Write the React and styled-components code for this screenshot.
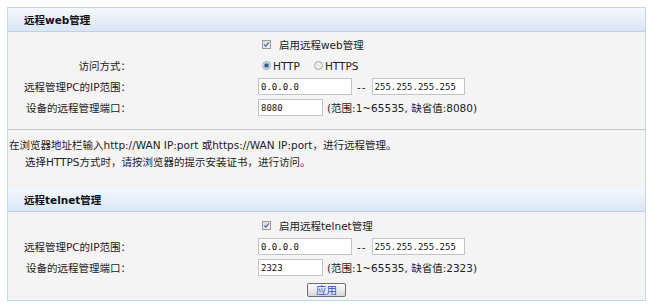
import React from 'react'
import styled, { createGlobalStyle } from 'styled-components'

const GlobalStyle = createGlobalStyle`
  html, body {
    margin: 0;
    padding: 0;
    background: #ffffff;
  }
  body {
    font-family: "DejaVu Sans", "Noto Sans CJK SC", sans-serif;
    font-size: 10.5px;
    color: #222;
  }
`

const Page = styled.div`
  padding: 7px 8px 2px 7px;
`

const Panel = styled.div`
  border: 1px solid #c5d6ec;
  background: #f4f4f4;
`

const Header = styled.div`
  height: 23px;
  border-bottom: 1px solid #bad0ec;
  background: linear-gradient(to bottom, #f5f8fd 0%, #e9f0fa 45%, #d9e6f7 100%);
  display: flex;
  align-items: center;
  padding-left: 16px;
  font-weight: bold;
  font-size: 10.5px;
  color: #111;
`

const Form = styled.div`
  display: grid;
  grid-template-columns: 123px 1fr;
  column-gap: 127px;
  grid-auto-rows: 21px;
  align-items: center;
  padding: ${({ $top }) => $top}px 0 ${({ $bottom }) => $bottom}px;
`

const Label = styled.div`
  text-align: right;
  white-space: nowrap;
  color: #222;
`

const Field = styled.div`
  display: flex;
  align-items: center;
  white-space: nowrap;
`

const Option = styled.label`
  display: flex;
  align-items: center;
  gap: ${({ $gap }) => $gap || 2}px;
  margin-left: 4px;
  margin-right: ${({ $right }) => $right || 0}px;
  color: #222;
`

const Input = styled.input`
  box-sizing: border-box;
  width: ${({ $w }) => $w}px;
  height: 17px;
  border: 1px solid #c4c4c4;
  background: #fff;
  padding: 0 2px;
  margin: 0;
  font-family: "DejaVu Sans Mono", "Liberation Mono", monospace;
  font-size: 9px;
  color: #111;
  outline: none;
`

const Dash = styled.span`
  margin: 0 5px;
  letter-spacing: 1px;
`

const Hint = styled.span`
  margin-left: 4px;
`

const Divider = styled.div`
  height: 1px;
  background: #c9c9c9;
`

const Notes = styled.div`
  padding: 7px 0 17px 1px;
  line-height: 17px;
`

const Note = styled.div`
  padding-left: ${({ $indent }) => $indent || 0}px;
  white-space: nowrap;
`

const ButtonRow = styled.div`
  display: flex;
  justify-content: center;
  padding: 5px 0 3px;
`

const Button = styled.button`
  box-sizing: border-box;
  width: 39px;
  height: 14px;
  padding: 0;
  border: 1px solid #6e6e6e;
  border-radius: 2px;
  background: linear-gradient(to bottom, #fafafa 0%, #ececec 50%, #d6d6d6 100%);
  color: #1f56d0;
  font-family: "DejaVu Sans", "Noto Sans CJK SC", sans-serif;
  font-size: 10.5px;
  line-height: 12px;
  cursor: pointer;
`

const CheckBox = () => (
  <svg width="9" height="9" viewBox="0 0 9 9">
    <defs>
      <linearGradient id="cb" x1="0" y1="0" x2="1" y2="1">
        <stop offset="0" stopColor="#d9d9d9" />
        <stop offset="1" stopColor="#f4f4f4" />
      </linearGradient>
    </defs>
    <rect x="0.5" y="0.5" width="8" height="8" fill="url(#cb)" stroke="#9b9b9b" />
    <path d="M2.2 4.4 L3.8 6.2 L6.9 2.3" fill="none" stroke="#5470a8" strokeWidth="1.3" />
  </svg>
)

const Radio = ({ on }) => (
  <svg width="9" height="9" viewBox="0 0 9 9">
    <circle cx="4.5" cy="4.5" r="4" fill="#ececec" stroke="#a6a6a6" />
    {on && <circle cx="4.5" cy="4.5" r="2.3" fill="#34559a" stroke="#7f9bd0" strokeWidth="0.8" />}
  </svg>
)

export default function App() {
  return (
    <Page>
      <GlobalStyle />
      <Panel>
        <Header>远程web管理</Header>
        <Form $top={2} $bottom={11}>
          <Label />
          <Field>
            <Option $gap={8}><CheckBox />启用远程web管理</Option>
          </Field>

          <Label>访问方式：</Label>
          <Field>
            <Option $right={10}><Radio on />HTTP</Option>
            <Option><Radio />HTTPS</Option>
          </Field>

          <Label>远程管理PC的IP范围：</Label>
          <Field>
            <Input $w={94} defaultValue="0.0.0.0" />
            <Dash>--</Dash>
            <Input $w={93} defaultValue="255.255.255.255" />
          </Field>

          <Label>设备的远程管理端口：</Label>
          <Field>
            <Input $w={65} defaultValue="8080" />
            <Hint>(范围:1~65535, 缺省值:8080)</Hint>
          </Field>
        </Form>

        <Divider />
        <Notes>
          <Note>在浏览器地址栏输入http://WAN IP:port 或https://WAN IP:port，进行远程管理。</Note>
          <Note $indent={16}>选择HTTPS方式时，请按浏览器的提示安装证书，进行访问。</Note>
        </Notes>

        <Header>远程telnet管理</Header>
        <Form $top={3} $bottom={0}>
          <Label />
          <Field>
            <Option $gap={8}><CheckBox />启用远程telnet管理</Option>
          </Field>

          <Label>远程管理PC的IP范围：</Label>
          <Field>
            <Input $w={94} defaultValue="0.0.0.0" />
            <Dash>--</Dash>
            <Input $w={93} defaultValue="255.255.255.255" />
          </Field>

          <Label>设备的远程管理端口：</Label>
          <Field>
            <Input $w={65} defaultValue="2323" />
            <Hint>(范围:1~65535, 缺省值:2323)</Hint>
          </Field>
        </Form>
        <ButtonRow>
          <Button>应用</Button>
        </ButtonRow>
      </Panel>
    </Page>
  )
}
